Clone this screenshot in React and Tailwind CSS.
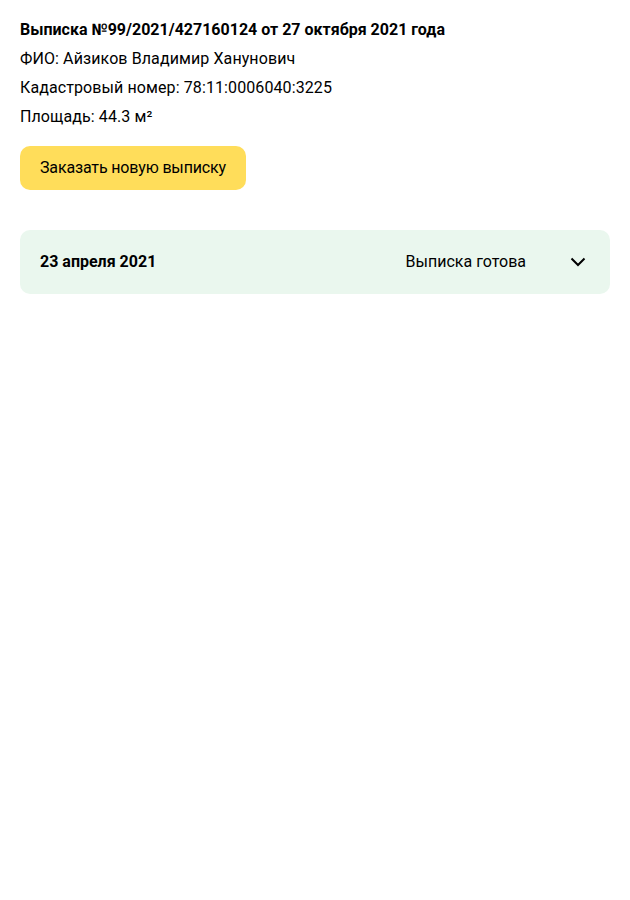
import React from 'react';

const App = () => {
    return (
        <div className="min-h-screen bg-white px-5 pt-[15px] text-black font-['Roboto','Liberation_Sans',sans-serif] text-base">
            {/* Info block */}
            <div className="leading-[29px]">
                <p className="font-bold">Выписка №99/2021/427160124 от 27 октября 2021 года</p>
                <p className="tracking-[0.1px]">ФИО: Айзиков Владимир Ханунович</p>
                <p className="tracking-[0.1px]">Кадастровый номер: 78:11:0006040:3225</p>
                <p className="tracking-[0.1px]">Площадь: 44.3 м²</p>
            </div>

            <button className="mt-[15px] h-11 px-5 rounded-[10px] bg-[#ffdd5a] text-base leading-none tracking-[-0.15px]">
                Заказать новую выписку
            </button>

            {/* Order row */}
            <div className="mt-10 h-16 rounded-[10px] bg-[#eaf7ee] flex items-center pl-5 pr-6">
                <span className="font-bold flex-1">23 апреля 2021</span>
                <span className="mr-11">Выписка готова</span>
                <svg width="16" height="10" viewBox="0 0 16 10" fill="none">
                    <path d="M1.5 1.5 8 8l6.5-6.5" stroke="#000" strokeWidth="2" />
                </svg>
            </div>
        </div>
    );
};

export default App;
